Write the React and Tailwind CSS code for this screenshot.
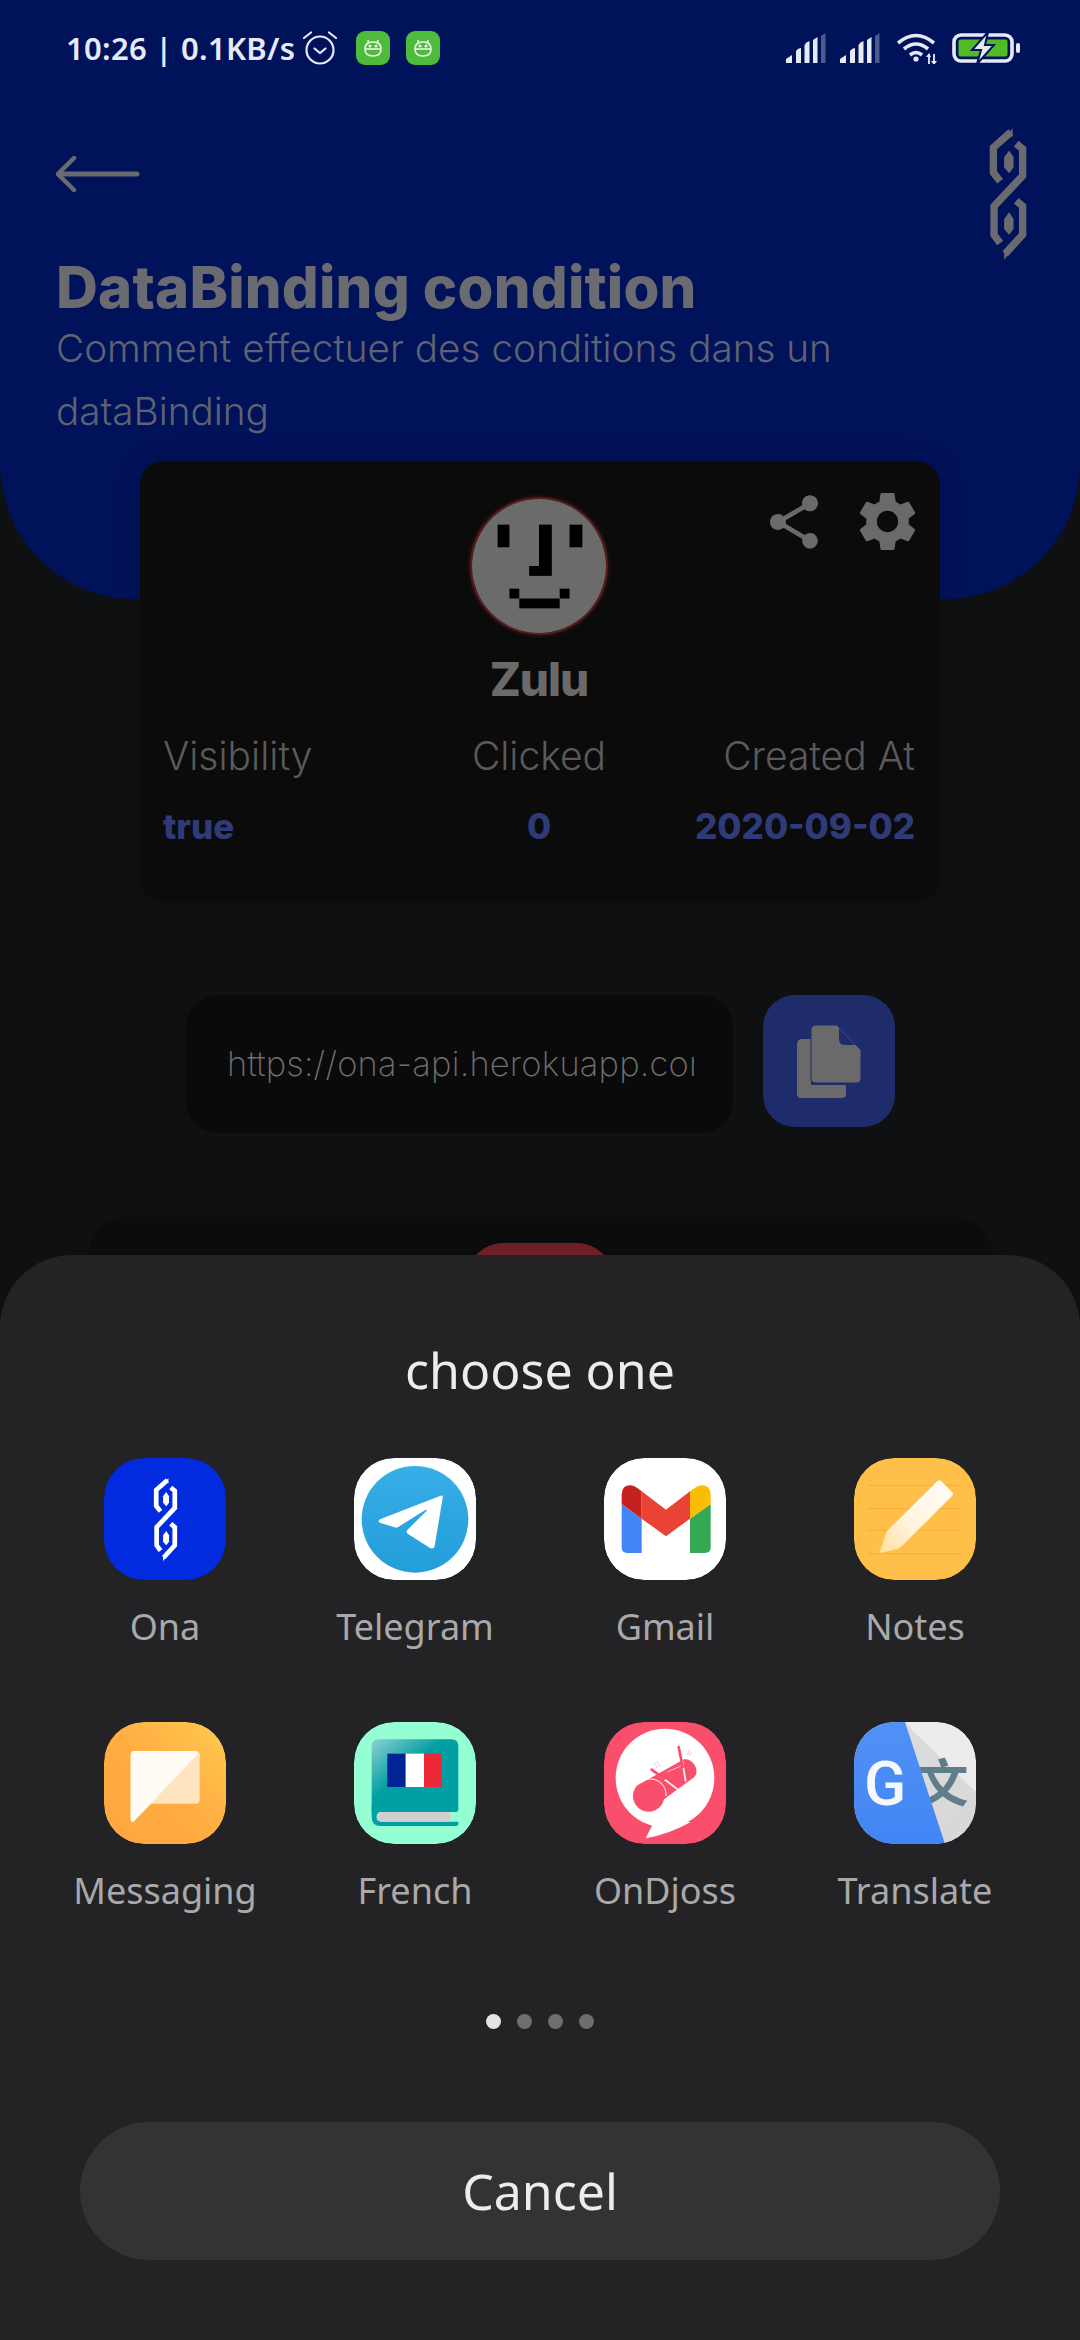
import React from "react";

const LinkGlyph = ({ color, className }) => (
  <svg viewBox="85 15 113 398" className={className}>
    <g fill="none" stroke={color} strokeWidth="22" strokeLinejoin="miter">
      <path d="M150 30 L98 76 L98 150 L118 176" />
      <path d="M166 64 L185 80 L185 160 L100 250 L100 335 L118 360" />
      <path d="M166 234 L185 250 L185 335 L133 392" />
    </g>
    <path fill={color} d="M145 85 L158 105 L158 135 L145 152 L130 135 L130 105 Z" />
    <path fill={color} d="M145 268 L158 288 L158 318 L145 335 L130 318 L130 288 Z" />
    <path fill={color} d="M155 18 L155 44 L140 40 Z" />
    <path fill={color} d="M130 410 L130 384 L145 390 Z" />
  </svg>
);

const Tile = () => (
  <div className="w-[34px] h-[34px] rounded-[9px] bg-[#4fbb3d] flex items-center justify-center">
    <svg viewBox="0 0 34 34" className="w-[34px] h-[34px]" fill="none" stroke="#e8f5e4" strokeWidth="1.6">
      <path d="M12 9 L12.5 12 M22 9 L21.5 12" />
      <path d="M12 12 Q17 10 22 12 Q25 14 25 18 Q25 25 17 25 Q9 25 9 18 Q9 14 12 12 Z" />
      <path d="M9 18 H25" />
      <circle cx="14" cy="15" r="0.8" fill="#e8f5e4" />
      <circle cx="20" cy="15" r="0.8" fill="#e8f5e4" />
    </svg>
  </div>
);

const Signal = () => (
  <svg viewBox="0 0 40 30" className="w-[40px] h-[30px]" fill="#e6eaf6">
    <path d="M0 30 V26 L6 22 V30 Z" />
    <path d="M10 30 V18 Q12 15 15 15 V30 Z" />
    <path d="M18.5 30 V12 Q20 9 23.5 8 V30 Z" />
    <path d="M27 30 V7 L31.5 4 V30 Z" />
    <path d="M35 30 V3 L39.5 0 V30 Z" fill="#4b5a8f" />
  </svg>
);

const IconOna = () => (
  <div className="w-[122px] h-[122px] rounded-[40px] bg-[#022be0] flex items-center justify-center">
    <LinkGlyph color="#ffffff" className="w-[25px] h-[85px]" />
  </div>
);

const IconTelegram = () => (
  <svg viewBox="0 0 366 366" className="w-[122px] h-[122px] rounded-[40px] bg-white">
    <defs>
      <linearGradient id="tg" x1="0" y1="0" x2="0" y2="1">
        <stop offset="0" stopColor="#37aee6" />
        <stop offset="1" stopColor="#229ed9" />
      </linearGradient>
    </defs>
    <circle cx="183" cy="184" r="160" fill="url(#tg)" />
    <path fill="#fff" d="M266 120 Q268 110 258 114 L78 184 Q70 190 78 194 L122 208 Q128 210 134 206 L214 156 Q220 154 218 158 L160 216 Q155 222 162 228 L228 270 Q240 275 242 264 Z" />
  </svg>
);

const IconGmail = () => (
  <svg viewBox="0 0 366 366" className="w-[122px] h-[122px] rounded-[40px] bg-white">
    <path fill="#4285f4" d="M53 138 L113 182 L113 285 L70 285 Q53 285 53 268 Z" />
    <path fill="#34a853" d="M320 138 L258 182 L258 285 L303 285 Q320 285 320 268 Z" />
    <path fill="#c5221f" d="M53 138 L53 110 Q53 82 80 82 Q90 82 100 90 L113 100 L113 182 Z" />
    <path fill="#ea4335" d="M113 100 L186 155 L258 100 L258 182 L186 235 L113 182 Z" />
    <path fill="#fbbc04" d="M258 100 L272 90 Q282 82 292 82 Q320 82 320 110 L320 138 L258 182 Z" />
  </svg>
);

const IconNotes = () => (
  <svg viewBox="0 0 366 366" className="w-[122px] h-[122px] rounded-[40px] bg-[#ffc04a]">
    <defs>
      <linearGradient id="pen" x1="1" y1="0" x2="0" y2="1">
        <stop offset="0" stopColor="#fffdf8" />
        <stop offset="0.55" stopColor="#fff6e2" />
        <stop offset="1" stopColor="#ffdf9f" />
      </linearGradient>
    </defs>
    <path stroke="#f2a22e" strokeWidth="2" d="M42 82 H320 M42 152 H320 M42 217 H320 M42 287 H320" />
    <path fill="url(#pen)" d="M80 285 Q76 285 78 280 L96 226 Q98 220 102 216 L250 70 Q256 64 262 70 L294 102 Q300 108 294 114 L146 262 Q140 268 132 272 Z" />
  </svg>
);

const IconMessaging = () => (
  <svg viewBox="0 0 366 366" className="w-[122px] h-[122px] rounded-[40px]">
    <defs>
      <linearGradient id="msg" x1="1" y1="0" x2="0" y2="1">
        <stop offset="0" stopColor="#ffcb4f" />
        <stop offset="0.5" stopColor="#ffad42" />
        <stop offset="1" stopColor="#ffa640" />
      </linearGradient>
    </defs>
    <rect width="366" height="366" fill="url(#msg)" />
    <path fill="#ffe4c0" d="M92 87 H275 Q287 87 287 99 V233 Q287 245 275 245 H142 L88 296 Q80 302 80 290 V99 Q80 87 92 87 Z" />
    <path fill="#fffcf6" d="M92 87 H275 Q280 87 282 95 L89 299 Q80 302 80 290 V99 Q80 87 92 87 Z" />
  </svg>
);

const IconFrench = () => (
  <svg viewBox="0 0 366 366" className="w-[122px] h-[122px] rounded-[40px] bg-[#93ffd2]">
    <defs>
      <linearGradient id="bk" x1="0" y1="0" x2="0.6" y2="0.6">
        <stop offset="0" stopColor="#8fd0d0" />
        <stop offset="0.7" stopColor="#009fa3" />
      </linearGradient>
    </defs>
    <path fill="url(#bk)" d="M74 52 H292 Q313 52 313 73 V260 Q313 270 303 270 H53 V73 Q53 52 74 52 Z" />
    <path fill="#009fa3" d="M53 250 H80 V270 Q68 272 68 285 Q68 299 82 299 H313 V306 Q313 312 305 312 H80 Q53 312 53 285 Z" />
    <path fill="#cfcfcf" d="M82 270 H290 V299 H82 Q68 299 68 285 Q68 270 82 270 Z" />
    <rect x="100" y="95" width="55" height="100" fill="#002395" />
    <rect x="155" y="95" width="55" height="100" fill="#ffffff" />
    <rect x="210" y="95" width="53" height="100" fill="#ed2939" />
  </svg>
);

const IconOnDjoss = () => (
  <svg viewBox="0 0 366 366" className="w-[122px] h-[122px] rounded-[40px] bg-[#f94f6c]">
    <circle cx="183" cy="168" r="148" fill="#fff" />
    <path fill="#fff" d="M125 349 L150 300 L260 300 Q200 335 125 349 Z" />
    <path fill="#f94f6c" d="M100 190 L240 112 Q262 108 275 135 Q284 158 262 172 L180 232 A47 47 0 1 1 100 190 Z" />
    <g stroke="#fff" fill="none">
      <path strokeWidth="3" d="M128 172 A47 47 0 0 1 186 222" />
      <path strokeWidth="5" d="M145 145 L225 205" />
      <path strokeWidth="5" d="M228 75 L245 178" />
      <path strokeWidth="2" d="M190 150 L235 130" />
    </g>
    <path stroke="#f94f6c" strokeWidth="8" strokeLinecap="round" d="M143 143 L180 170 M224 75 L236 135" />
    <path stroke="#f4a3b0" strokeWidth="2" fill="none" d="M158 118 L170 135 M150 122 L160 138 M256 85 L250 100 M262 90 L256 102" />
  </svg>
);

const IconTranslate = () => (
  <svg viewBox="0 0 366 366" className="w-[122px] h-[122px] rounded-[40px]">
    <defs>
      <linearGradient id="gb" x1="0" y1="0" x2="0" y2="1">
        <stop offset="0" stopColor="#5191f6" />
        <stop offset="1" stopColor="#4285f4" />
      </linearGradient>
      <linearGradient id="gr" x1="0" y1="0" x2="1" y2="1">
        <stop offset="0" stopColor="#f0f0f0" />
        <stop offset="1" stopColor="#dfdfdf" />
      </linearGradient>
    </defs>
    <rect width="366" height="366" fill="url(#gr)" />
    <path fill="#d4d4d4" opacity="0.7" d="M153 0 L366 200 V366 H273 Z" />
    <path fill="#ececec" d="M170 20 L366 210 V0 H160 Z" />
    <text x="188" y="240" textAnchor="start" fontFamily="'Noto Sans CJK SC', sans-serif" fontWeight="700" fontSize="155" fill="#607d8b">文</text>
    <path fill="url(#gb)" d="M0 0 H153 L273 366 H0 Z" />
    <text x="30" y="249" fontFamily="Roboto, sans-serif" fontWeight="500" fontSize="186" fill="#f5f7fa">G</text>
  </svg>
);

const apps = [
  ["Ona", IconOna],
  ["Telegram", IconTelegram],
  ["Gmail", IconGmail],
  ["Notes", IconNotes],
  ["Messaging", IconMessaging],
  ["French", IconFrench],
  ["OnDjoss", IconOnDjoss],
  ["Translate", IconTranslate],
];

export default function App() {
  return (
    <div className="relative w-[1080px] h-[2340px] overflow-hidden bg-[#0f1012] font-['Inter',sans-serif]">
      {/* Header */}
      <div className="relative h-[599px] bg-[#00125a] rounded-b-[135px] pl-[56px] pr-[55px]">
        <div className="flex items-center h-[36px] pt-[30px] box-content">
          <div className="flex items-center ml-[10px]">
            <span className="font-['Noto_Sans',sans-serif] text-[31px] font-semibold text-[#e6eaf6] leading-none tracking-[0.3px] whitespace-nowrap">10:26 | 0.1KB/s</span>
            <svg viewBox="0 0 36 36" className="w-[36px] h-[36px] ml-[7px]" fill="none" stroke="#e6eaf6" strokeWidth="2.2">
              <circle cx="18" cy="20" r="13.5" />
              <path d="M12.5 18.5 L18 23 L23.5 18.5" strokeLinecap="round" />
              <path d="M2 8 L9 2.5 M34 8 L27 2.5" strokeLinecap="round" />
            </svg>
            <div className="flex gap-[16px] ml-[18px]">
              <Tile />
              <Tile />
            </div>
          </div>
          <div className="ml-auto flex items-center mr-[3px]">
            <div className="flex gap-[14px]">
              <Signal />
              <Signal />
            </div>
            <svg viewBox="0 0 44 32" className="w-[44px] h-[32px] ml-[16px]" fill="none" stroke="#e6eaf6" strokeWidth="3.6">
              <path d="M2 11 Q20 -4 38 11" />
              <path d="M8 17 Q20 7 32 17" />
              <path d="M14 23 Q20 18 26 23" />
              <circle cx="20" cy="27" r="2.6" fill="#e6eaf6" stroke="none" />
              <path strokeWidth="1.8" d="M33 32 V22 M38 32 V22" />
              <path fill="#e6eaf6" stroke="none" d="M30 25 L33 21 L35 25 Z M35 29 L38 33 L41 29 Z" />
            </svg>
            <svg viewBox="0 0 70 30" className="w-[70px] h-[30px] ml-[12px]">
              <rect x="2" y="2" width="58" height="26" rx="7" fill="none" stroke="#e6eaf6" strokeWidth="3.6" />
              <rect x="6.5" y="6.5" width="49" height="17" rx="2" fill="#4fbb25" />
              <rect x="64" y="10" width="4" height="10" rx="2" fill="#e6eaf6" />
              <path d="M36 -1 L20 17 H29 L25 31 L42 12 H33 Z" fill="#e6eaf6" stroke="#00125a" strokeWidth="2" />
            </svg>
          </div>
        </div>

        <div className="flex justify-between items-start mt-[61px]">
          <svg viewBox="0 0 84 36" className="w-[84px] h-[36px] mt-[29px]" fill="none" stroke="#6a6b70" strokeWidth="4.5" strokeLinecap="round">
            <path d="M3 18 H81" strokeWidth="5" />
            <path d="M18 2 L2 18 L18 34" />
          </svg>
          <LinkGlyph color="#6a6b70" className="w-[38px] h-[134px] -mr-[2px]" />
        </div>

        <h1 className="text-[58px] leading-[60px] font-extrabold text-[#6a6b70] -mt-[4px] whitespace-nowrap tracking-[0.2px]">DataBinding condition</h1>
        <p className="text-[38.7px] leading-[63px] font-light text-[#5f6270] w-[840px]">Comment effectuer des conditions dans un dataBinding</p>
      </div>

      {/* Main card */}
      <div className="relative mx-auto w-[800px] h-[440px] -mt-[138px] rounded-[24px] bg-[#0b0b0c] shadow-[0_0_24px_rgba(0,0,0,0.2)] flex flex-col items-center pt-[36px] pl-[23px] pr-[25px]">
        <div className="absolute top-[25px] right-[17px] flex items-center gap-[26px]">
          <svg viewBox="0 0 24 24" className="w-[64px] h-[64px]" fill="#6a6a6a">
            <path d="M18 16.08c-.76 0-1.44.3-1.96.77L8.91 12.7c.05-.23.09-.46.09-.7s-.04-.47-.09-.7l7.05-4.11c.54.5 1.25.81 2.04.81 1.66 0 3-1.34 3-3s-1.34-3-3-3-3 1.34-3 3c0 .24.04.47.09.7L8.04 9.81C7.5 9.31 6.79 9 6 9c-1.66 0-3 1.34-3 3s1.34 3 3 3c.79 0 1.5-.31 2.04-.81l7.12 4.16c-.05.21-.08.43-.08.65 0 1.61 1.31 2.92 2.92 2.92s2.92-1.31 2.92-2.92-1.31-2.92-2.92-2.92z" />
          </svg>
          <svg viewBox="0 0 24 24" className="w-[71px] h-[71px]" fill="#6a6a6a">
            <path d="M19.14 12.94c.04-.3.06-.61.06-.94 0-.32-.02-.64-.07-.94l2.03-1.58c.18-.14.23-.41.12-.61l-1.92-3.32c-.12-.22-.37-.29-.59-.22l-2.39.96c-.5-.38-1.03-.7-1.62-.94l-.36-2.54c-.04-.24-.24-.41-.48-.41h-3.84c-.24 0-.43.17-.47.41l-.36 2.54c-.59.24-1.13.57-1.62.94l-2.39-.96c-.22-.08-.47 0-.59.22L2.74 8.87c-.12.21-.08.47.12.61l2.03 1.58c-.05.3-.09.63-.09.94s.02.64.07.94l-2.03 1.58c-.18.14-.23.41-.12.61l1.92 3.32c.12.22.37.29.59.22l2.39-.96c.5.38 1.03.7 1.62.94l.36 2.54c.05.24.24.41.48.41h3.84c.24 0 .44-.17.47-.41l.36-2.54c.59-.24 1.13-.56 1.62-.94l2.39.96c.22.08.47 0 .59-.22l1.92-3.32c.12-.22.07-.47-.12-.61l-2.01-1.58zM12 15.6c-1.98 0-3.6-1.62-3.6-3.6s1.62-3.6 3.6-3.6 3.6 1.62 3.6 3.6-1.62 3.6-3.6 3.6z" />
          </svg>
        </div>
        <div className="w-[138px] h-[138px] rounded-full border-[2px] border-[#5c1a1c] shadow-[0_0_4px_rgba(110,30,30,0.6)] overflow-hidden shrink-0">
          <svg viewBox="0 0 136 136" className="w-full h-full" fill="#000">
            <rect width="136" height="136" fill="#6b6b6b" />
            <rect x="26" y="26" width="12" height="23" />
            <rect x="99" y="26" width="13" height="23" />
            <rect x="68" y="26" width="13" height="52" />
            <rect x="58" y="68" width="11" height="10" />
            <rect x="38" y="91" width="10" height="10" />
            <rect x="89" y="91" width="10" height="10" />
            <rect x="48" y="101" width="41" height="10" />
          </svg>
        </div>
        <div className="text-[46px] leading-[52px] font-extrabold text-[#6a6a6a] mt-[18px] tracking-[-1px]">Zulu</div>
        <div className="w-full grid grid-cols-3 mt-[26px] text-[39px] leading-[50px] font-light text-[#5a5a5a]">
          <div>Visibility</div>
          <div className="text-center">Clicked</div>
          <div className="text-right whitespace-nowrap">Created At</div>
        </div>
        <div className="w-full grid grid-cols-3 mt-[23px] text-[35px] leading-[44px] font-extrabold text-[#2f3b78]">
          <div>true</div>
          <div className="text-center">0</div>
          <div className="text-right whitespace-nowrap">2020-09-02</div>
        </div>
      </div>

      {/* Link row */}
      <div className="flex items-start ml-[186px] mt-[94px]">
        <div className="w-[547px] h-[138px] rounded-[32px] bg-[#0a0a0b] flex items-center pl-[41px] pr-[39px] overflow-hidden">
          <span className="block w-full overflow-hidden whitespace-nowrap text-[34.5px] tracking-[0.2px] font-extralight text-[#707070]">https://ona-api.herokuapp.com</span>
        </div>
        <div className="w-[132px] h-[132px] rounded-[32px] bg-[#1e2c6b] ml-[30px] flex items-center justify-center">
          <svg viewBox="0 0 64 73" className="w-[64px] h-[73px]">
            <path fill="#6a6a6a" d="M14 14 V60 H49 V69 Q49 73 45 73 H4 Q0 73 0 69 V19 Q0 15 4 14 Z" />
            <path fill="#6a6a6a" stroke="#1e2c6b" strokeWidth="1" d="M19 0 H40 L64 25 V53 Q64 58 59 58 H19 Q14 58 14 53 V5 Q14 0 19 0 Z" />
            <path fill="#1e2c6b" d="M42 3 L58 20 L48 20 Q42 20 42 14 Z" />
          </svg>
        </div>
      </div>

      {/* Second card, mostly hidden */}
      <div className="mx-auto w-[905px] h-[400px] mt-[84px] rounded-[40px] bg-[#0c0c0d] flex justify-center pt-[26px]">
        <div className="w-[146px] h-[146px] rounded-[36px] bg-[#6e2024]" />
      </div>

      {/* Bottom sheet */}
      <div className="absolute left-0 right-0 bottom-0 h-[1085px] rounded-t-[72px] bg-[#232325] flex flex-col items-center font-['Noto_Sans',sans-serif]">
        <div className="text-[50px] leading-[60px] text-[#ececec] mt-[85px] font-normal">choose one</div>
        <div className="grid grid-cols-4 w-[1000px] mt-[58px] gap-y-[73px]">
          {apps.map(([label, Icon]) => (
            <div key={label} className="flex flex-col items-center">
              <div className="w-[122px] h-[122px] rounded-[40px] overflow-hidden">
                <Icon />
              </div>
              <div className="text-[36px] leading-[44px] text-[#a9a9a9] mt-[25px] whitespace-nowrap">{label}</div>
            </div>
          ))}
        </div>
        <div className="flex gap-[16px] mt-[101px]">
          <div className="w-[15px] h-[15px] rounded-full bg-[#e4e4e4]" />
          <div className="w-[15px] h-[15px] rounded-full bg-[#6e6e70]" />
          <div className="w-[15px] h-[15px] rounded-full bg-[#6e6e70]" />
          <div className="w-[15px] h-[15px] rounded-full bg-[#6e6e70]" />
        </div>
        <div className="w-[920px] h-[138px] rounded-full bg-[#333335] mt-[93px] flex items-center justify-center text-[50px] text-[#ececec]">Cancel</div>
      </div>
    </div>
  );
}
